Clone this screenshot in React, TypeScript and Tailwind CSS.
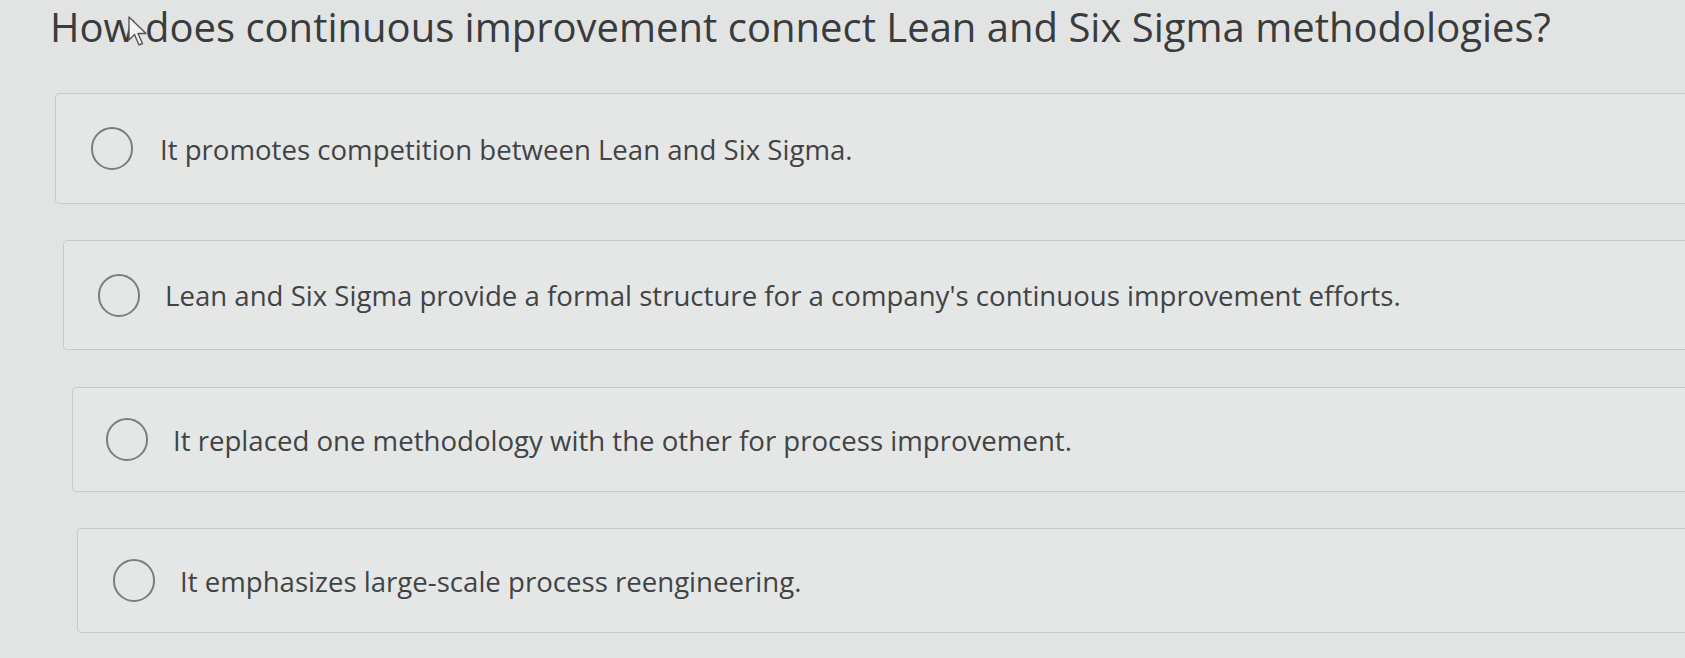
import React from "react";

const options = [
  { text: "It promotes competition between Lean and Six Sigma.", card: "ml-[55px] mt-[40px] h-[111px] pl-[35px] gap-[27px]" },
  { text: "Lean and Six Sigma provide a formal structure for a company's continuous improvement efforts.", card: "ml-[63px] mt-[36px] h-[110px] pl-[34px] gap-[25px]" },
  { text: "It replaced one methodology with the other for process improvement.", card: "ml-[72px] mt-[37px] h-[105px] pl-[33px] gap-[25px]" },
  { text: "It emphasizes large-scale process reengineering.", card: "ml-[77px] mt-[36px] h-[105px] pl-[35px] gap-[25px]" },
];

function Cursor() {
  return (
    <svg
      className="absolute left-[128px] top-[16px]"
      width="22"
      height="32"
      viewBox="0 0 22 32"
    >
      <path
        d="M1 1 L1 24 L6.5 18.5 L11 29 L14.5 27.5 L10 17.5 L18 17.5 Z"
        fill="#f4f4f4"
        stroke="#555"
        strokeWidth="1.4"
        strokeLinejoin="round"
      />
    </svg>
  );
}

export default function App() {
  return (
    <div
      className="relative w-full h-[658px] overflow-hidden bg-[#e2e4e4] text-[#3b3d3e]"
      style={{ fontFamily: '"Open Sans", "Noto Sans", sans-serif' }}
    >
      <h1 className="pl-[50px] text-[40px] leading-[53px] text-[#3a3b3c]">
        How does continuous improvement connect Lean and Six Sigma methodologies?
      </h1>
      <Cursor />

      <div className="mr-[-30px] flex flex-col">
        {options.map((o, i) => (
          <div
            key={i}
            className={`${o.card} flex items-center rounded-[4px] border border-[#c7cacb] bg-[#e5e7e7]`}
          >
            <span className="w-[42px] h-[43px] shrink-0 rounded-full border-2 border-[#7b7d7e]" />
            <span className="text-[27.6px] leading-[34px] text-[#414345]">{o.text}</span>
          </div>
        ))}
      </div>
    </div>
  );
}
